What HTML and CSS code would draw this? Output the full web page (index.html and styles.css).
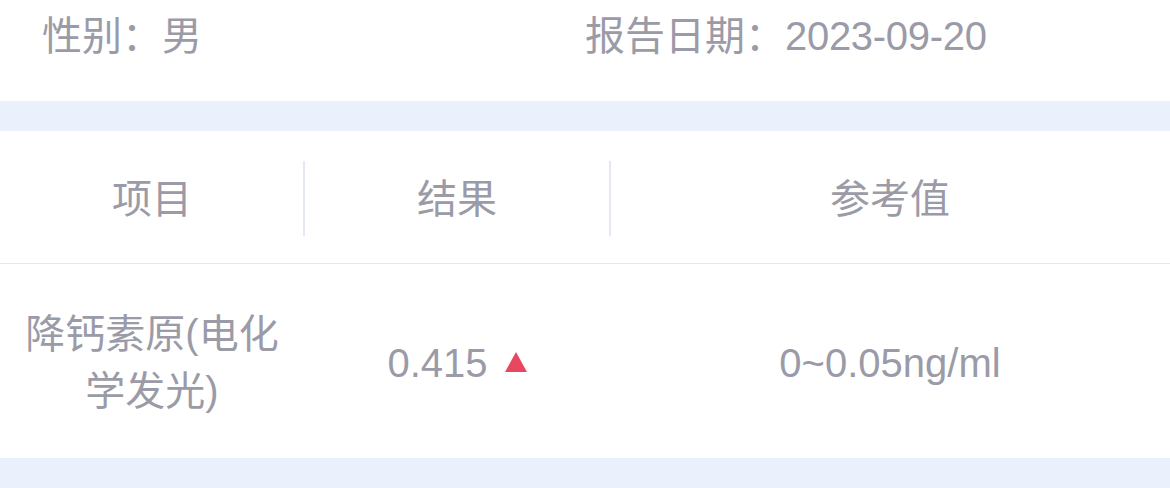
FILE: index.html
```html
<!DOCTYPE html>
<html lang="zh">
<head>
<meta charset="utf-8">
<link rel="stylesheet" href="styles.css">
</head>
<body>
<div class="page">
  <div class="info">
    <div class="info-item">性别：男</div>
    <div class="info-item">报告日期：<span class="num">2023-09-20</span></div>
  </div>
  <div class="band"></div>
  <div class="table">
    <div class="row head">
      <div class="cell c1"><span>项目</span></div>
      <div class="cell c2 divided"><span>结果</span></div>
      <div class="cell c3 divided"><span>参考值</span></div>
    </div>
    <div class="row data">
      <div class="cell c1"><span class="name">降钙素原(电化学发光)</span></div>
      <div class="cell c2"><span class="num">0.415</span><span class="up"></span></div>
      <div class="cell c3"><span class="num">0~0.05ng/ml</span></div>
    </div>
  </div>
  <div class="band"></div>
</div>
</body>
</html>
```
FILE: styles.css
```css
* { box-sizing: border-box; }
html, body { margin: 0; padding: 0; background: #fff; }
body {
  font-family: "Liberation Sans", "Noto Sans CJK SC", sans-serif;
  color: #9b9ba8;
  font-size: 40px;
}
.page { width: 1170px; }
.info {
  height: 101px;
  display: grid;
  grid-template-columns: 543px 1fr;
  padding: 8px 0 0 42px;
  line-height: 56px;
}
.info-item { white-space: nowrap; }
.info .num { letter-spacing: -0.3px; }
.band { height: 30px; background: #ebf1fc; }
.row {
  display: grid;
  grid-template-columns: 304px 306px 560px;
}
.head {
  height: 133px;
  border-bottom: 1px solid #e8e8ea;
}
.data { height: 194px; }
.cell {
  display: flex;
  align-items: center;
  justify-content: center;
  text-align: center;
  position: relative;
}
.head .cell span { margin-top: -3px; }
.divided::before {
  content: "";
  position: absolute;
  left: -1px;
  top: 30px;
  height: 75px;
  width: 2px;
  background: #e3e8f3;
}
.c1 { padding: 0 20px; }
.name { line-height: 57px; padding-top: 4px; }
.data .num { padding-top: 4px; }
.up {
  width: 0;
  height: 0;
  margin-left: 17px;
  margin-top: 2px;
  border-left: 11px solid transparent;
  border-right: 11px solid transparent;
  border-bottom: 20px solid #e8475f;
}
```
